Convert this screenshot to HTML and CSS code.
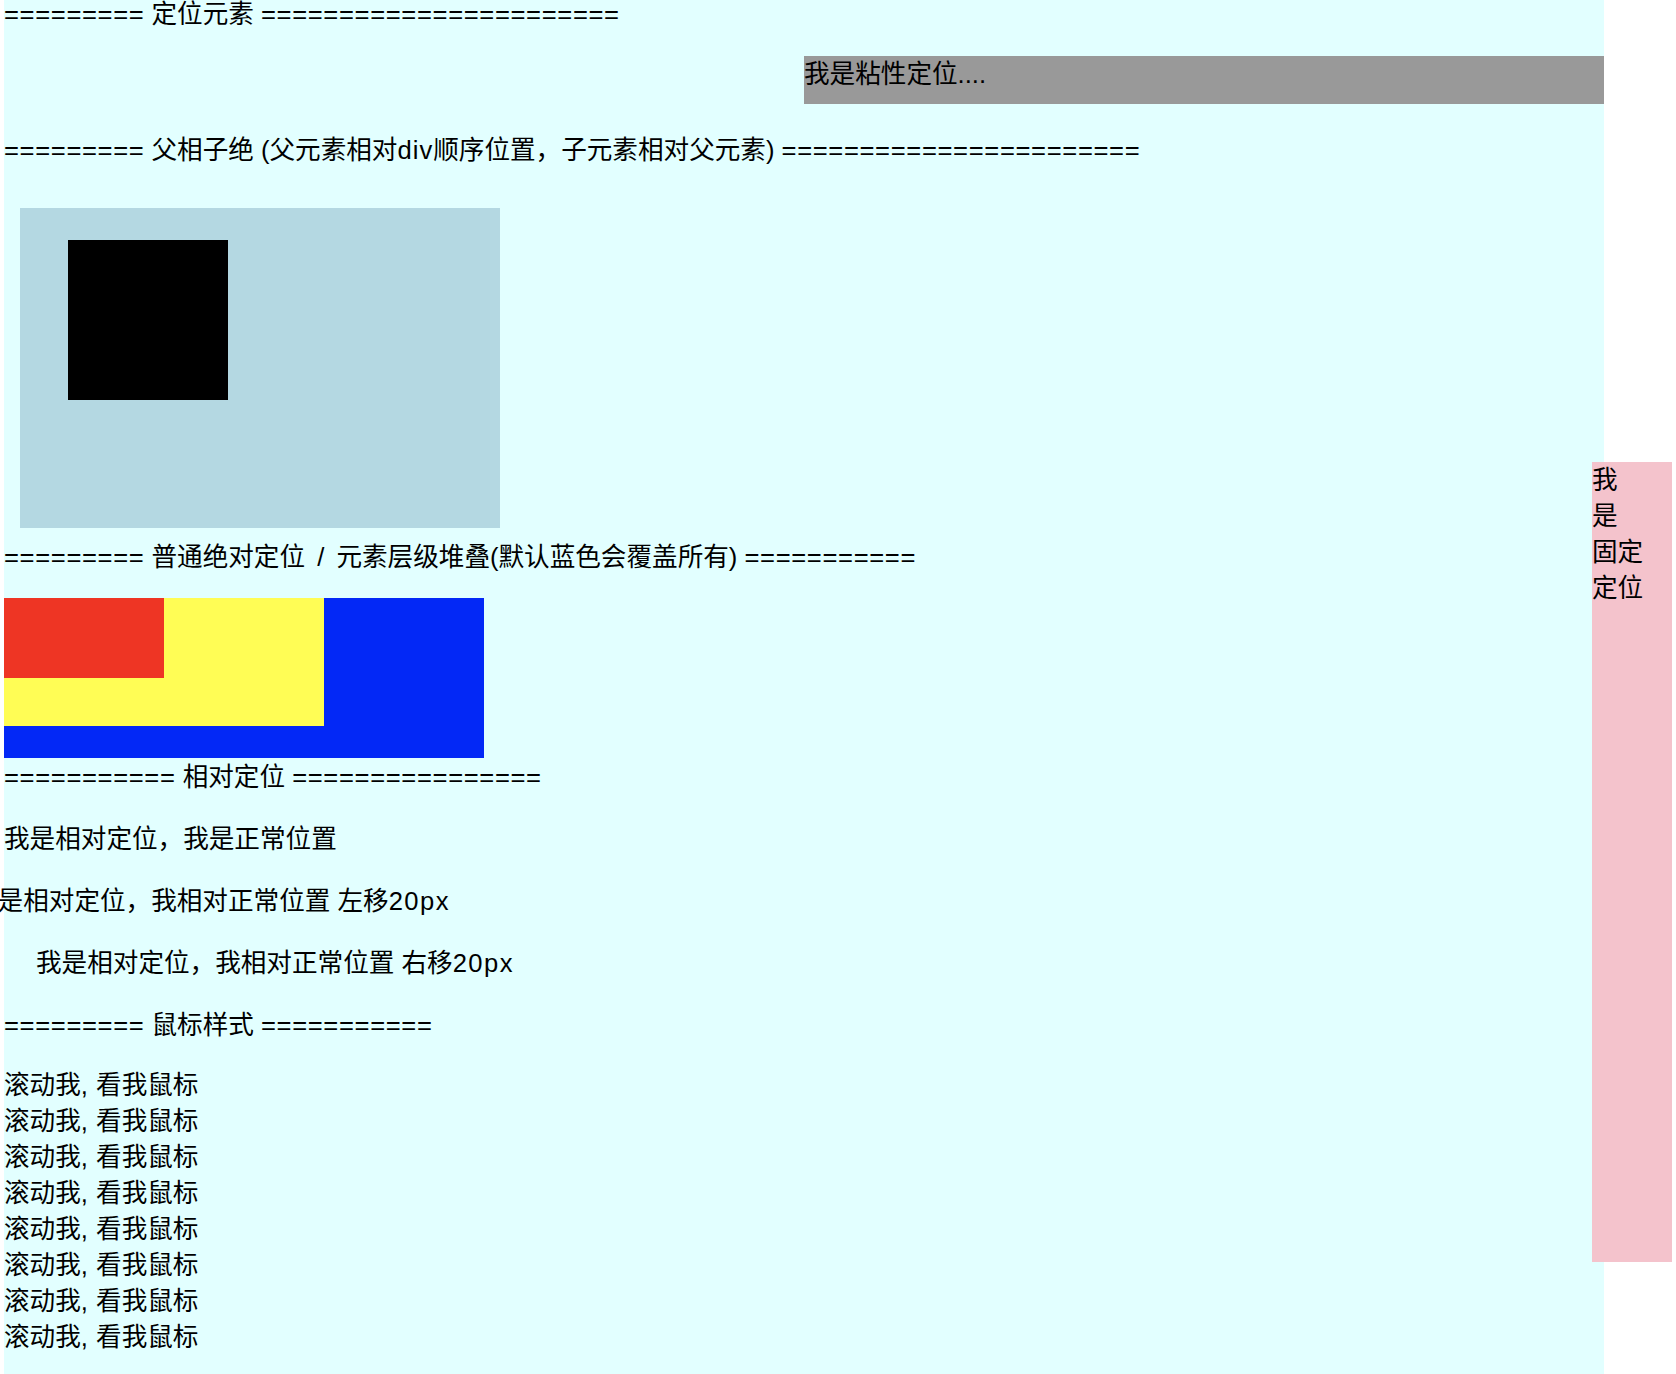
FILE: index.html
```html
<!DOCTYPE html>
<html lang="zh-CN">
<head>
<meta charset="utf-8">
<title>定位元素</title>
<link rel="stylesheet" href="styles.css">
</head>
<body>
<div class="page">
  <p class="title title-first"><span class="eq">=========</span> 定位元素 <span class="eq">=======================</span></p>
  <div class="sticky">我是粘性定位....</div>
  <p class="title title-parent"><span class="eq">=========</span> 父相子绝 (父元素相对<span class="latin">div</span>顺序位置，子元素相对父元素) <span class="eq">=======================</span></p>
  <div class="parent-box">
    <div class="child-box"></div>
  </div>
  <p class="title title-stack"><span class="eq">=========</span> 普通绝对定位 <span class="slash">/</span> 元素层级堆叠(默认蓝色会覆盖所有) <span class="eq">===========</span></p>
  <div class="stack">
    <div class="layer layer-blue"></div>
    <div class="layer layer-yellow"></div>
    <div class="layer layer-red"></div>
  </div>
  <p class="title title-rel"><span class="eq">===========</span> 相对定位 <span class="eq">================</span></p>
  <p class="rel">我是相对定位，我是正常位置</p>
  <p class="rel rel-left">我是相对定位，我相对正常位置 左移<span class="latin-num">20px</span></p>
  <p class="rel rel-right">我是相对定位，我相对正常位置 右移<span class="latin-num">20px</span></p>
  <p class="title title-cursor"><span class="eq">=========</span> 鼠标样式 <span class="eq">===========</span></p>
  <div class="scroll">
    <div class="scroll-line">滚动我<span class="comma">,</span> 看我鼠标</div>
    <div class="scroll-line">滚动我<span class="comma">,</span> 看我鼠标</div>
    <div class="scroll-line">滚动我<span class="comma">,</span> 看我鼠标</div>
    <div class="scroll-line">滚动我<span class="comma">,</span> 看我鼠标</div>
    <div class="scroll-line">滚动我<span class="comma">,</span> 看我鼠标</div>
    <div class="scroll-line">滚动我<span class="comma">,</span> 看我鼠标</div>
    <div class="scroll-line">滚动我<span class="comma">,</span> 看我鼠标</div>
    <div class="scroll-line">滚动我<span class="comma">,</span> 看我鼠标</div>
  </div>
</div>
<div class="fixed-box">
  <span class="fixed-line">我</span>
  <span class="fixed-line">是</span>
  <span class="fixed-line">固定</span>
  <span class="fixed-line">定位</span>
</div>
</body>
</html>
```
FILE: styles.css
```css
html, body {
  margin: 0;
  padding: 0;
  background: #ffffff;
  overflow: hidden;
}

body {
  font-family: "Liberation Sans", "Noto Sans CJK SC", sans-serif;
  font-size: 25.6px;
  line-height: 36px;
  color: #000000;
}

.page {
  width: 1600px;
  margin-left: 4px;
  min-height: 1378px;
  background: #e2ffff;
  display: flow-root;
}

p {
  margin: 0;
}

.eq {
  letter-spacing: 0.65px;
}

.latin {
  letter-spacing: 1px;
}

.latin-num {
  letter-spacing: 1.5px;
}

.slash {
  margin: 0 5px;
}

.comma {
  margin-right: 1px;
}

.title {
  white-space: nowrap;
}

.title-first {
  margin-top: -4px;
}

.sticky {
  margin-top: 24px;
  margin-left: 50%;
  width: 50%;
  height: 48px;
  background: #999999;
}

.title-parent {
  margin-top: 28px;
}

.parent-box {
  position: relative;
  margin: 40px 0 0 16px;
  width: 480px;
  height: 320px;
  background: #b4d8e2;
}

.child-box {
  position: absolute;
  left: 48px;
  top: 32px;
  width: 160px;
  height: 160px;
  background: #000000;
}

.title-stack {
  margin-top: 11px;
}

.stack {
  position: relative;
  margin-top: 23px;
  height: 160px;
}

.layer {
  position: absolute;
  left: 0;
  top: 0;
}

.layer-blue {
  width: 480px;
  height: 160px;
  background: #0328f6;
  z-index: 1;
}

.layer-yellow {
  width: 320px;
  height: 128px;
  background: #fffd55;
  z-index: 2;
}

.layer-red {
  width: 160px;
  height: 80px;
  background: #ee3524;
  z-index: 3;
}

.title-rel {
  margin-top: 1px;
}

.rel {
  position: relative;
  margin-top: 26px;
}

.rel-left {
  left: -32px;
}

.rel-right {
  left: 32px;
}

.title-cursor {
  margin-top: 26px;
}

.scroll {
  margin-top: 24px;
}

.fixed-box {
  position: fixed;
  top: 462px;
  right: 4px;
  width: 80px;
  height: 800px;
  background: #f4c3cc;
}

.fixed-line {
  display: block;
}
```
